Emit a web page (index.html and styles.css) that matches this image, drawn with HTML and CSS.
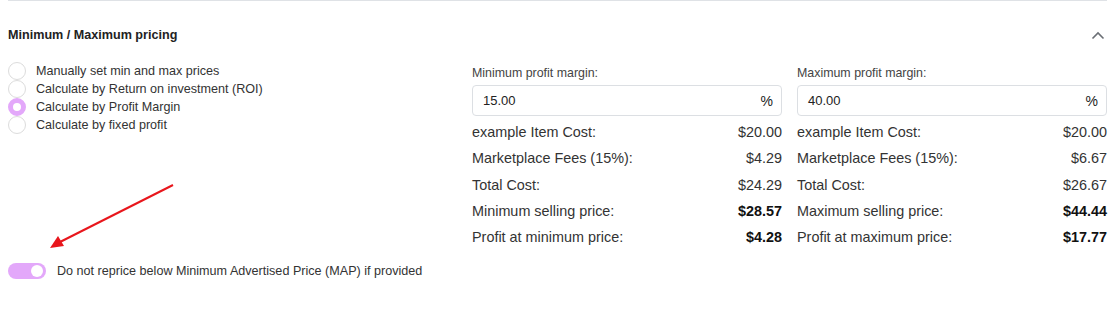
FILE: index.html
```html
<!DOCTYPE html>
<html>

<head>
  <meta charset="utf-8">
  <link rel="stylesheet" href="styles.css">
</head>

<body>

<section class="pricing">
  <header class="pricing-header">
    <h2 class="pricing-title">Minimum / Maximum pricing</h2>
    <svg class="chevron" width="14" height="9" viewBox="0 0 14 9">
      <path d="M1.5 7.5 L7 2 L12.5 7.5" fill="none" stroke="#6b6f75" stroke-width="1.6"/>
    </svg>
  </header>

  <div class="pricing-body">
    <div class="modes">
      <label class="mode"><span class="radio"></span>Manually set min and max prices</label>
      <label class="mode"><span class="radio"></span>Calculate by Return on investment (ROI)</label>
      <label class="mode"><span class="radio is-checked"></span>Calculate by Profit Margin</label>
      <label class="mode"><span class="radio"></span>Calculate by fixed profit</label>
    </div>

    <div class="calc">
      <label class="calc-label">Minimum profit margin:</label>
      <div class="input-group">
        <span class="input-value">15.00</span>
        <span class="input-suffix">%</span>
      </div>
      <div class="calc-row"><span>example Item Cost:</span><span>$20.00</span></div>
      <div class="calc-row"><span>Marketplace Fees (15%):</span><span>$4.29</span></div>
      <div class="calc-row"><span>Total Cost:</span><span>$24.29</span></div>
      <div class="calc-row"><span>Minimum selling price:</span><strong>$28.57</strong></div>
      <div class="calc-row"><span>Profit at minimum price:</span><strong>$4.28</strong></div>
    </div>

    <div class="calc">
      <label class="calc-label">Maximum profit margin:</label>
      <div class="input-group">
        <span class="input-value">40.00</span>
        <span class="input-suffix">%</span>
      </div>
      <div class="calc-row"><span>example Item Cost:</span><span>$20.00</span></div>
      <div class="calc-row"><span>Marketplace Fees (15%):</span><span>$6.67</span></div>
      <div class="calc-row"><span>Total Cost:</span><span>$26.67</span></div>
      <div class="calc-row"><span>Maximum selling price:</span><strong>$44.44</strong></div>
      <div class="calc-row"><span>Profit at maximum price:</span><strong>$17.77</strong></div>
    </div>
  </div>

  <div class="map-row">
    <span class="toggle is-on"><span class="toggle-knob"></span></span>
    <span class="map-label">Do not reprice below Minimum Advertised Price (MAP) if provided</span>
  </div>

  <svg class="arrow" width="200" height="80" viewBox="0 0 200 80">
    <line x1="173" y1="5" x2="60" y2="62" stroke="#e8161c" stroke-width="2"/>
    <polygon points="50,68 58,56 64,66" fill="#e8161c"/>
  </svg>
</section>

</body>

</html>
```

FILE: styles.css
```css
html, body {
  margin: 0;
  background: #fff;
  font-family: "Liberation Sans", Arial, sans-serif;
  color: #333;
}

.pricing {
  position: relative;
  margin: 0 12px 0 8px;
  border-top: 1px solid #dfe2e6;
}

.pricing-header {
  display: flex;
  justify-content: space-between;
  align-items: center;
  padding: 26px 0 19px;
}

.pricing-title {
  margin: 0;
  font-size: 12.6px;
  line-height: 16px;
  font-weight: bold;
  color: #222;
}

.chevron {
  margin-right: 2px;
}

.pricing-body {
  display: grid;
  grid-template-columns: 449px 310px 310px;
  column-gap: 15px;
}

.modes {
  display: flex;
  flex-direction: column;
}

.mode {
  display: flex;
  align-items: center;
  height: 18px;
  font-size: 12.6px;
  color: #333;
}

.radio {
  box-sizing: border-box;
  width: 18px;
  height: 18px;
  margin-right: 10px;
  border: 1px solid #dcdcdc;
  border-radius: 50%;
  background: #fff;
}

.radio.is-checked {
  border: 5px solid #e3a8fa;
}

.calc-label {
  display: block;
  margin-top: 4px;
  font-size: 12.4px;
  line-height: 14px;
  color: #444;
}

.input-group {
  box-sizing: border-box;
  display: flex;
  justify-content: space-between;
  align-items: center;
  height: 31px;
  margin: 5px 0 3px;
  padding: 0 8px 0 10px;
  border: 1px solid #dcdfe3;
  border-radius: 4px;
  font-size: 13px;
  color: #222;
}

.input-suffix {
  font-size: 14px;
}

.calc-row {
  display: flex;
  justify-content: space-between;
  align-items: center;
  height: 26.25px;
  font-size: 14.4px;
  color: #333;
}

.calc-row strong {
  color: #111;
}

.map-row {
  display: flex;
  align-items: center;
  margin-top: 13px;
  height: 16px;
}

.toggle {
  box-sizing: border-box;
  display: flex;
  align-items: center;
  justify-content: flex-end;
  width: 38px;
  height: 16px;
  margin-right: 11px;
  padding: 0 3px;
  border-radius: 8px;
  background: #e3a8fa;
}

.toggle-knob {
  width: 12px;
  height: 12px;
  border-radius: 50%;
  background: #fff;
}

.map-label {
  font-size: 12.6px;
  color: #333;
}

.arrow {
  position: absolute;
  left: -8px;
  top: 179px;
}
```
